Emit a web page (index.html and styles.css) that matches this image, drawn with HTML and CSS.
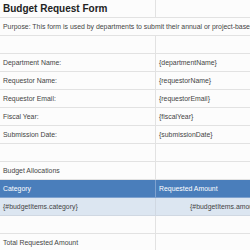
FILE: index.html
```html
<!DOCTYPE html>
<html>
<head>
<meta charset="utf-8">
<link rel="stylesheet" href="styles.css">
</head>
<body>
<table class="sheet">
  <colgroup><col class="c1"><col class="c2"></colgroup>
  <tr><td class="title">Budget Request Form</td><td></td></tr>
  <tr><td colspan="2" class="purpose">Purpose: This form is used by departments to submit their annual or project-based budget requests for review and approval.</td></tr>
  <tr><td></td><td></td></tr>
  <tr><td>Department Name:</td><td>{departmentName}</td></tr>
  <tr><td>Requestor Name:</td><td>{requestorName}</td></tr>
  <tr><td>Requestor Email:</td><td>{requestorEmail}</td></tr>
  <tr><td>Fiscal Year:</td><td>{fiscalYear}</td></tr>
  <tr><td>Submission Date:</td><td>{submissionDate}</td></tr>
  <tr><td></td><td></td></tr>
  <tr><td>Budget Allocations</td><td></td></tr>
  <tr class="head"><td>Category</td><td>Requested Amount</td></tr>
  <tr class="item"><td>{#budgetItems.category}</td><td class="amount">{#budgetItems.amount}{/budgetItems}</td></tr>
  <tr><td></td><td></td></tr>
  <tr><td>Total Requested Amount</td><td></td></tr>
</table>
</body>
</html>
```
FILE: styles.css
```css
html, body {
  margin: 0;
  padding: 0;
  overflow: hidden;
  background: #ffffff;
}
.sheet {
  border-collapse: collapse;
  table-layout: fixed;
  width: 320px;
  margin: -1px 0 0 -1px;
  font-family: "Liberation Sans", Arial, sans-serif;
  font-size: 6.9px;
  color: #444444;
}
.c1 { width: 156px; }
.c2 { width: 164px; }
.sheet tr { height: 18px; }
.sheet td {
  border: 1px solid #e2e2e2;
  padding: 0 0 0 3px;
  white-space: nowrap;
  overflow: hidden;
  vertical-align: middle;
  background: #fcfcfc;
}
.sheet td.title {
  font-size: 10px;
  font-weight: bold;
  color: #222222;
}
.sheet .head td {
  background: #4a7ebb;
  color: #ffffff;
  border-color: #7fa2cf;
}
.sheet .item td {
  background: #dce6f1;
  border-color: #d0d8e2;
}
.sheet td.amount {
  padding-left: 34px;
}
```
